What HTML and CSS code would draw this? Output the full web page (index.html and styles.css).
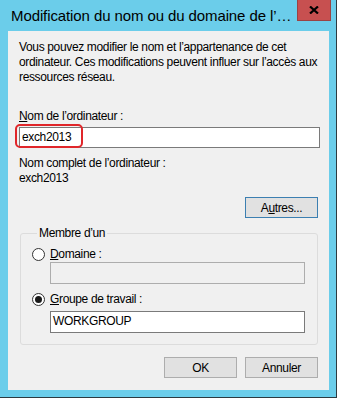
FILE: index.html
```html
<!DOCTYPE html>
<html lang="fr">
<head>
  <meta charset="UTF-8">
  <title>Modification du nom ou du domaine de l’ordinateur</title>
  <link rel="stylesheet" href="styles.css">
</head>
<body>
  <div class="window">
    <div class="titlebar">
      <span class="title">Modification du nom ou du domaine de l’…</span>
      <span class="close">
        <svg width="10" height="8" viewBox="0 0 10 8">
          <path d="M1 0.5 L9 7.5 M9 0.5 L1 7.5" stroke="#000" stroke-width="2.2" fill="none"/>
        </svg>
      </span>
    </div>
    <div class="client">
      <p class="intro">Vous pouvez modifier le nom et l’appartenance de cet<br>ordinateur. Ces modifications peuvent influer sur l’accès aux<br>ressources réseau.</p>

      <div class="label label-name"><u>N</u>om de l’ordinateur :</div>
      <div class="field-wrap">
        <div class="field field-name">exch2013</div>
        <span class="mark"></span>
      </div>

      <div class="label label-full">Nom complet de l’ordinateur :</div>
      <div class="value">exch2013</div>

      <div class="row-right">
        <button class="btn btn-focus">A<u>u</u>tres...</button>
      </div>

      <fieldset class="group">
        <legend>Membre d’un</legend>
        <div class="radio-row first">
          <span class="radio"></span><span><u>D</u>omaine :</span>
        </div>
        <div class="field field-group disabled"></div>
        <div class="radio-row second">
          <span class="radio checked"></span><span><u>G</u>roupe de travail :</span>
        </div>
        <div class="field field-group">WORKGROUP</div>
      </fieldset>

      <div class="buttons">
        <button class="btn">OK</button>
        <button class="btn">Annuler</button>
      </div>
    </div>
  </div>
</body>
</html>
```

FILE: styles.css
```css
body{
  margin:0;
  font-family:"Liberation Sans", Arial, sans-serif;
  font-size:12px;
  letter-spacing:-0.35px;
  color:#000;
}

.window{
  width:337px;
  height:398px;
  box-sizing:border-box;
  background:#6bcdea;
  border-right:1px solid #2c3a40;
  border-bottom:1px solid #2c3a40;
  padding:0 7px 7px 8px;
  display:flex;
  flex-direction:column;
}

.titlebar{
  height:31px;
  flex:none;
  display:flex;
  align-items:flex-start;
  margin:0 -7px 0 -8px;
  padding:0 5px 0 11px;
}
.title{
  font-size:15px;
  letter-spacing:-0.1px;
  line-height:18px;
  padding-top:7px;
  white-space:nowrap;
}
.close{
  margin-left:auto;
  width:34px;
  height:21px;
  box-sizing:border-box;
  background:#c75050;
  border:1px solid #9a4343;
  border-top:none;
  display:flex;
  align-items:center;
  justify-content:center;
}

.client{
  flex:1;
  background:#f0f0f0;
  padding:9px 11px 0 11px;
  line-height:15px;
}

.intro{
  margin:0;
  white-space:nowrap;
}

.label-name{
  margin-top:24px;
}
.field-wrap{
  position:relative;
  margin-top:3px;
}
.field{
  box-sizing:border-box;
  height:21px;
  background:#fff;
  border:1px solid #7a7a7a;
  padding:0 2px;
  line-height:18px;
}
.field-name{
  width:301px;
}
/* annotation drawn over the input */
.mark{
  position:absolute;
  left:-4px;
  top:-3px;
  width:68px;
  height:24px;
  box-sizing:border-box;
  border:2px solid #e0262a;
  border-radius:5px;
}

.label-full{
  margin-top:8px;
}

.row-right{
  display:flex;
  justify-content:flex-end;
  margin-top:11px;
}

.btn{
  width:73px;
  height:21px;
  box-sizing:border-box;
  background:#e1e1e1;
  border:1px solid #adadad;
  padding:0;
  font-family:inherit;
  font-size:12px;
  letter-spacing:inherit;
  color:#000;
  line-height:18px;
}
.btn-focus{
  border-color:#3c7fb1;
}

.group{
  margin:8px 0 0 1px;
  width:298px;
  box-sizing:border-box;
  border:1px solid #dcdcdc;
  border-radius:3px;
  padding:0 0 11px 11px;
}
.group legend{
  margin-left:5px;
  padding:0 2px;
  line-height:15px;
}

.radio-row{
  display:flex;
  align-items:center;
  gap:5px;
}
.radio-row.first{
  margin-top:6px;
}
.radio-row.second{
  margin-top:8px;
}
.radio{
  width:13px;
  height:13px;
  box-sizing:border-box;
  border:1px solid #333;
  border-radius:50%;
  background:#fff;
  display:flex;
  align-items:center;
  justify-content:center;
}
.radio.checked::after{
  content:"";
  width:7px;
  height:7px;
  border-radius:50%;
  background:#1a1a1a;
}

.field-group{
  width:255px;
  height:22px;
  margin-left:18px;
  line-height:19px;
}
.radio-row.second + .field-group{
  margin-top:4px;
}
.field.disabled{
  background:#f0f0f0;
  border-color:#adadad;
}

.buttons{
  display:flex;
  justify-content:flex-end;
  gap:8px;
  margin-top:12px;
}
```
